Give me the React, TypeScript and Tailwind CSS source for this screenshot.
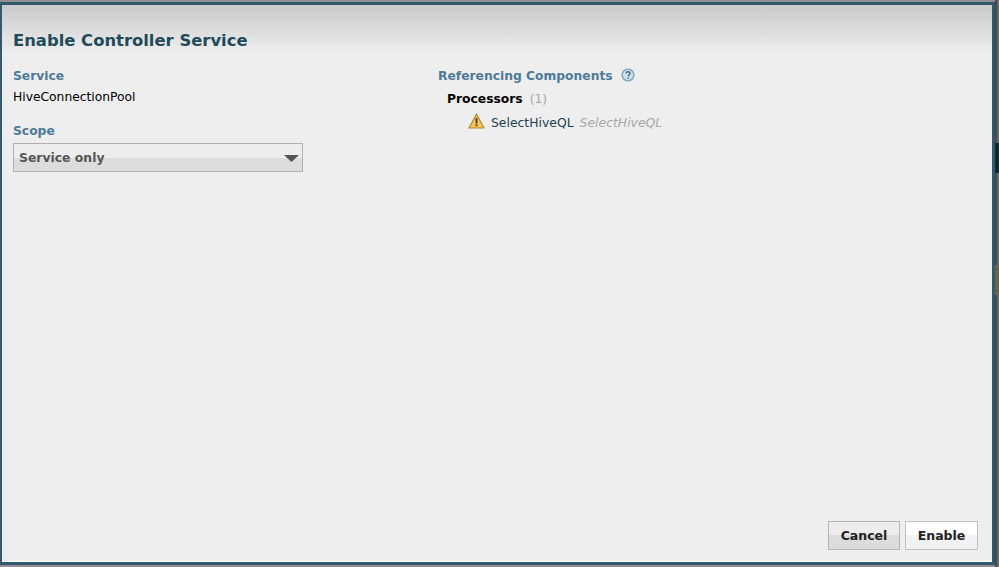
export default function App() {
  const labelCls = "text-[12.3px] leading-[16px] font-bold text-[#4d7a99]";
  return (
    <div className="flex w-[999px] h-[567px] overflow-hidden bg-[#4a4a4a] font-['DejaVu_Sans',sans-serif]">
      <div className="flex flex-col w-[995px] h-[567px] pt-[2px] pb-[2px] bg-[#8f8f8f]">
        <div className="flex flex-col flex-1 border-t-[3px] border-r-[3px] border-b-[3px] border-l-[2px] border-[#32596c] bg-[#eeeeee] bg-gradient-to-b from-[#c9c9c9] to-[#eeeeee] bg-[length:100%_48px] bg-no-repeat">
          <div className="pl-[11px] pt-[26px] text-[16.4px] leading-[20px] font-bold text-[#1f4a5a]">
            Enable Controller Service
          </div>
          <div className="flex flex-1 pl-[11px] pt-[17px]">
            <div className="w-[425px]">
              <div className={labelCls}>Service</div>
              <div className="mt-[5px] text-[12.3px] leading-[16px] text-black">HiveConnectionPool</div>
              <div className={`${labelCls} mt-[18px]`}>Scope</div>
              <div className="relative mt-[4px] flex h-[29px] w-[290px] items-center border border-[#b0b0b0] bg-gradient-to-b from-[#ededed] from-50% to-[#dcdcdc] to-50% pl-[5px] pt-px text-[12.4px] font-bold text-[#555555]">
                Service only
                <svg className="absolute right-[3px] top-[11px]" width="15" height="7" viewBox="0 0 15 7">
                  <path d="M0 0H15L7.5 7Z" fill="#555555" />
                </svg>
              </div>
            </div>
            <div className="flex-1">
              <div className="flex h-[16px] items-center">
                <span className={labelCls}>Referencing Components</span>
                <svg className="ml-[8px] mb-[3px]" width="14" height="14" viewBox="0 0 14 14">
                  <circle cx="7" cy="7" r="5.8" fill="#d5e2ea" stroke="#86a9bf" strokeWidth="1.6" />
                  <path d="M5 5.6C5 4.4 5.9 3.8 7 3.8C8.2 3.8 9 4.5 9 5.5C9 6.9 7.2 6.9 7.2 8.3" fill="none" stroke="#3f6c8a" strokeWidth="1.4" />
                  <rect x="6.5" y="9.2" width="1.4" height="1.4" fill="#3f6c8a" />
                </svg>
              </div>
              <div className="mt-[7px] ml-[9px] flex items-baseline text-[12.3px] leading-[16px]">
                <span className="font-bold text-black">Processors</span>
                <span className="ml-[7px] text-[#a8a8a8]">(1)</span>
              </div>
              <div className="mt-[6px] ml-[30px] flex items-center text-[12.4px] leading-[16px]">
                <svg className="mb-[3px]" width="17" height="16" viewBox="0 0 17 16">
                  <path d="M8.5 1L16 15H1Z" fill="#f2c65a" stroke="#b58a2c" strokeWidth="1.2" strokeLinejoin="round" />
                  <rect x="7.6" y="5" width="1.8" height="5.5" fill="#4a3a10" />
                  <rect x="7.6" y="11.3" width="1.8" height="1.8" fill="#4a3a10" />
                </svg>
                <span className="ml-[6px] text-[#1f3f50]">SelectHiveQL</span>
                <span className="ml-[6px] italic text-[#a8a8a8]">SelectHiveQL</span>
              </div>
            </div>
          </div>
          <div className="flex justify-end gap-[5px] pr-[14px] pb-[11px]">
            <button className="h-[29px] w-[72px] border border-[#b5b5b5] bg-gradient-to-b from-[#ededed] from-50% to-[#dcdcdc] to-50% pt-px text-[12.5px] font-bold text-[#222222]">
              Cancel
            </button>
            <button className="h-[29px] w-[73px] border border-[#c0c0c0] bg-gradient-to-b from-white from-50% to-[#f2f2f2] to-50% pt-px text-[12.5px] font-bold text-[#222222]">
              Enable
            </button>
          </div>
          <div className="h-px bg-white" />
        </div>
      </div>
      <div className="flex flex-col w-[4px] h-[567px] bg-gradient-to-r from-[#3d3d3d] to-[#777777]">
        <div className="h-[143px]" />
        <div className="h-[30px] bg-[#18262d]" />
        <div className="h-[92px]" />
        <div className="h-[30px] bg-[#6b6248]" />
      </div>
    </div>
  );
}
